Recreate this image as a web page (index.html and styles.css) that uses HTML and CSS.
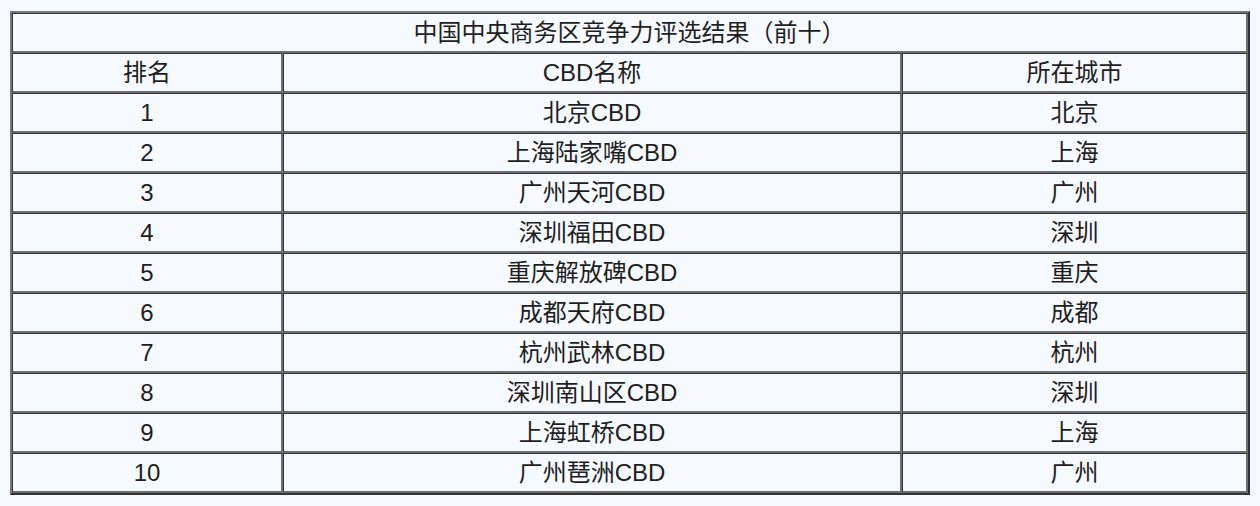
FILE: index.html
```html
<!DOCTYPE html>
<html lang="zh-CN">
<head>
<meta charset="utf-8">
<title>中国中央商务区竞争力评选结果</title>
<link rel="stylesheet" href="styles.css">
</head>
<body>
<table class="rank">
  <colgroup>
    <col class="c1">
    <col class="c2">
    <col class="c3">
  </colgroup>
  <tr><td colspan="3">中国中央商务区竞争力评选结果（前十）</td></tr>
  <tr><td>排名</td><td>CBD名称</td><td>所在城市</td></tr>
  <tr><td>1</td><td>北京CBD</td><td>北京</td></tr>
  <tr><td>2</td><td>上海陆家嘴CBD</td><td>上海</td></tr>
  <tr><td>3</td><td>广州天河CBD</td><td>广州</td></tr>
  <tr><td>4</td><td>深圳福田CBD</td><td>深圳</td></tr>
  <tr><td>5</td><td>重庆解放碑CBD</td><td>重庆</td></tr>
  <tr><td>6</td><td>成都天府CBD</td><td>成都</td></tr>
  <tr><td>7</td><td>杭州武林CBD</td><td>杭州</td></tr>
  <tr><td>8</td><td>深圳南山区CBD</td><td>深圳</td></tr>
  <tr><td>9</td><td>上海虹桥CBD</td><td>上海</td></tr>
  <tr><td>10</td><td>广州琶洲CBD</td><td>广州</td></tr>
</table>
</body>
</html>
```
FILE: styles.css
```css
html, body {
  background: #f6f9fe;
}
body {
  margin: 11px 10px;
  font-family: "Liberation Sans", "Noto Sans CJK SC", sans-serif;
  color: #1e1e1e;
}
.rank {
  width: 1240px;
  table-layout: fixed;
  border-collapse: separate;
  border-spacing: 0;
  border-style: solid;
  border-width: 2px;
  border-color: #777 #333 #333 #777;
  background: #f6f9fe;
}
.c1 { width: 271px; }
.c2 { width: 619px; }
.c3 { width: 346px; }
.rank td {
  height: 37px;
  padding: 0;
  line-height: 37px;
  font-size: 24px;
  text-align: center;
  border-style: solid;
  border-width: 1px 2px 2px 1px;
  border-color: #333 #6e6e6e #6e6e6e #333;
  white-space: nowrap;
}
```
